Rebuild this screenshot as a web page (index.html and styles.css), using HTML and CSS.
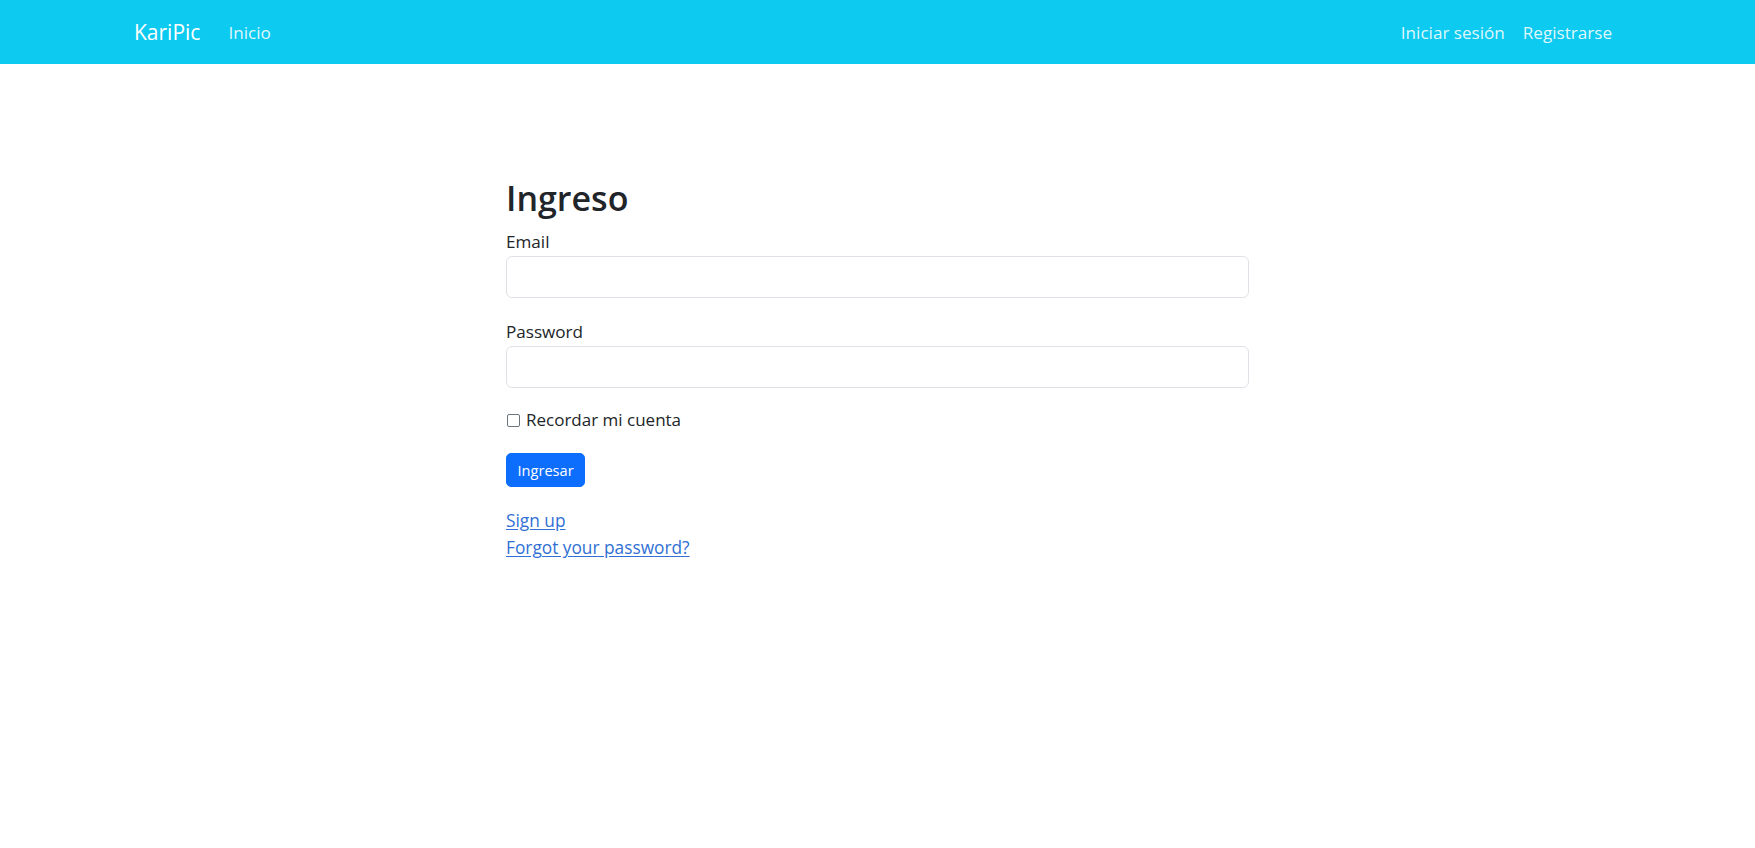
FILE: index.html
```html
<!DOCTYPE html>
<html lang="es">
<head>
<meta charset="utf-8">
<title>KariPic</title>
<link rel="stylesheet" href="styles.css">
</head>
<body>
<nav class="navbar">
  <div class="nav-container">
    <div class="nav-left">
      <a class="brand" href="#">KariPic</a>
      <a class="nav-link" href="#">Inicio</a>
    </div>
    <div class="nav-right">
      <a class="nav-link" href="#">Iniciar sesión</a>
      <a class="nav-link" href="#">Registrarse</a>
    </div>
  </div>
</nav>
<main class="main">
  <div class="login">
    <h2 class="title">Ingreso</h2>
    <form class="form">
      <div class="field">
        <label class="label" for="email">Email</label>
        <input class="input" id="email" type="email">
      </div>
      <div class="field field-pw">
        <label class="label" for="password">Password</label>
        <input class="input" id="password" type="password">
      </div>
      <div class="check">
        <span class="checkbox"></span>
        <label class="check-label">Recordar mi cuenta</label>
      </div>
      <div class="actions">
        <button class="btn" type="button">Ingresar</button>
      </div>
    </form>
    <div class="links">
      <a class="link" href="#">Sign up</a>
      <a class="link" href="#">Forgot your password?</a>
    </div>
  </div>
</main>
</body>
</html>
```
FILE: styles.css
```css
* { box-sizing: border-box; }
body {
  margin: 0;
  font-family: "Open Sans", "Noto Sans", sans-serif;
  font-size: 17.2px;
  line-height: 1.5;
  color: #212529;
  background: #fff;
}
a { text-decoration: none; }

.navbar {
  height: 64px;
  background: #0dcaf0;
}
.nav-container {
  width: 1487px;
  height: 100%;
  margin: 0 auto;
  display: flex;
  align-items: center;
  justify-content: space-between;
}
.nav-left, .nav-right {
  display: flex;
  align-items: center;
}
.brand {
  font-size: 21px;
  line-height: 30px;
  color: #fff;
  margin-right: 19px;
}
.nav-link {
  font-size: 17.1px;
  line-height: 26px;
  padding: 2px 9px 0;
  color: rgba(255, 255, 255, 0.88);
}

.main {
  padding-top: 114px;
}
.login {
  width: 743px;
  margin: 0 auto;
}
.title {
  margin: 0 0 10.5px;
  font-size: 34px;
  font-weight: 600;
  line-height: 1.2;
  color: #212529;
}
.form { margin: 0; }
.field { display: flex; flex-direction: column; }
.field-pw { margin-top: 21.5px; }
.label {
  display: block;
  line-height: 25.5px;
  margin-bottom: 1px;
  font-size: 17.1px;
}
.input {
  display: block;
  width: 100%;
  height: 42px;
  border: 1px solid #dee2e6;
  border-radius: 6px;
  background: #fff;
  font: inherit;
  padding: 6px 13px;
  outline: none;
}
.check {
  margin-top: 19.5px;
  display: flex;
  align-items: center;
  height: 25.5px;
}
.checkbox {
  width: 13px;
  height: 13px;
  border: 1px solid #6c757d;
  border-radius: 2px;
  margin: 1px 6px 0 1px;
  background: #fff;
}
.check-label {
  font-size: 17px;
  color: #212529;
}
.actions { margin-top: 20px; }
.btn {
  display: inline-block;
  height: 34px;
  padding: 0 10.5px;
  border: 1px solid #0d6efd;
  border-radius: 5px;
  background: #0d6efd;
  color: #fff;
  font-family: "Open Sans", sans-serif;
  font-size: 14.6px;
  line-height: 32px;
  cursor: pointer;
}
.links {
  margin-top: 20px;
  display: flex;
  flex-direction: column;
  align-items: flex-start;
}
.link {
  font-size: 17.3px;
  line-height: 27.5px;
  color: #3070d4;
  text-decoration: underline;
  text-underline-offset: 2px;
}
```
